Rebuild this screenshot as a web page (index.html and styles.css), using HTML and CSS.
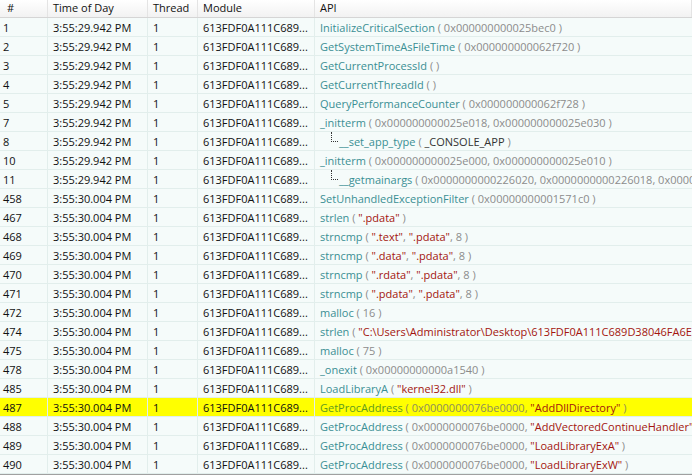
FILE: index.html
```html
<!DOCTYPE html>
<html>
<head>
<meta charset="utf-8">
<link rel="stylesheet" href="styles.css">
</head>
<body>
<div class="grid">
  <div class="hrow">
    <div class="hc c1">#</div><div class="hc">Time of Day</div><div class="hc">Thread</div><div class="hc">Module</div><div class="hc">API</div>
  </div>
  <div class="row"><div>1</div><div>3:55:29.942 PM</div><div>1</div><div>613FDF0A111C689...</div><div class="api"><span class="fn">InitializeCriticalSection</span> <span class="p">( 0x000000000025bec0 )</span></div></div>
  <div class="row"><div>2</div><div>3:55:29.942 PM</div><div>1</div><div>613FDF0A111C689...</div><div class="api"><span class="fn">GetSystemTimeAsFileTime</span> <span class="p">( 0x000000000062f720 )</span></div></div>
  <div class="row"><div>3</div><div>3:55:29.942 PM</div><div>1</div><div>613FDF0A111C689...</div><div class="api"><span class="fn">GetCurrentProcessId</span> <span class="p">( )</span></div></div>
  <div class="row"><div>4</div><div>3:55:29.942 PM</div><div>1</div><div>613FDF0A111C689...</div><div class="api"><span class="fn">GetCurrentThreadId</span> <span class="p">( )</span></div></div>
  <div class="row"><div>5</div><div>3:55:29.942 PM</div><div>1</div><div>613FDF0A111C689...</div><div class="api"><span class="fn">QueryPerformanceCounter</span> <span class="p">( 0x000000000062f728 )</span></div></div>
  <div class="row"><div>7</div><div>3:55:29.942 PM</div><div>1</div><div>613FDF0A111C689...</div><div class="api"><span class="fn">_initterm</span> <span class="p">( 0x000000000025e018, 0x000000000025e030 )</span></div></div>
  <div class="row"><div>8</div><div>3:55:29.942 PM</div><div>1</div><div>613FDF0A111C689...</div><div class="api child"><span class="tree"></span><span class="fn">__set_app_type</span> <span class="p">( <span class="k">_CONSOLE_APP</span> )</span></div></div>
  <div class="row"><div>10</div><div>3:55:29.942 PM</div><div>1</div><div>613FDF0A111C689...</div><div class="api"><span class="fn">_initterm</span> <span class="p">( 0x000000000025e000, 0x000000000025e010 )</span></div></div>
  <div class="row"><div>11</div><div>3:55:29.942 PM</div><div>1</div><div>613FDF0A111C689...</div><div class="api child"><span class="tree"></span><span class="fn">__getmainargs</span> <span class="p">( 0x0000000000226020, 0x0000000000226018, 0x0000000000226010 )</span></div></div>
  <div class="row"><div>458</div><div>3:55:30.004 PM</div><div>1</div><div>613FDF0A111C689...</div><div class="api"><span class="fn">SetUnhandledExceptionFilter</span> <span class="p">( 0x00000000001571c0 )</span></div></div>
  <div class="row"><div>467</div><div>3:55:30.004 PM</div><div>1</div><div>613FDF0A111C689...</div><div class="api"><span class="fn">strlen</span> <span class="p">( <span class="s">".pdata"</span> )</span></div></div>
  <div class="row"><div>468</div><div>3:55:30.004 PM</div><div>1</div><div>613FDF0A111C689...</div><div class="api"><span class="fn">strncmp</span> <span class="p">( <span class="s">".text"</span>, <span class="s">".pdata"</span>, 8 )</span></div></div>
  <div class="row"><div>469</div><div>3:55:30.004 PM</div><div>1</div><div>613FDF0A111C689...</div><div class="api"><span class="fn">strncmp</span> <span class="p">( <span class="s">".data"</span>, <span class="s">".pdata"</span>, 8 )</span></div></div>
  <div class="row"><div>470</div><div>3:55:30.004 PM</div><div>1</div><div>613FDF0A111C689...</div><div class="api"><span class="fn">strncmp</span> <span class="p">( <span class="s">".rdata"</span>, <span class="s">".pdata"</span>, 8 )</span></div></div>
  <div class="row"><div>471</div><div>3:55:30.004 PM</div><div>1</div><div>613FDF0A111C689...</div><div class="api"><span class="fn">strncmp</span> <span class="p">( <span class="s">".pdata"</span>, <span class="s">".pdata"</span>, 8 )</span></div></div>
  <div class="row"><div>472</div><div>3:55:30.004 PM</div><div>1</div><div>613FDF0A111C689...</div><div class="api"><span class="fn">malloc</span> <span class="p">( 16 )</span></div></div>
  <div class="row"><div>474</div><div>3:55:30.004 PM</div><div>1</div><div>613FDF0A111C689...</div><div class="api"><span class="fn">strlen</span> <span class="p">( <span class="s">"C:\Users\Administrator\Desktop\613FDF0A111C689D38046FA6EE6F2C0A.exe"</span> )</span></div></div>
  <div class="row"><div>475</div><div>3:55:30.004 PM</div><div>1</div><div>613FDF0A111C689...</div><div class="api"><span class="fn">malloc</span> <span class="p">( 75 )</span></div></div>
  <div class="row"><div>478</div><div>3:55:30.004 PM</div><div>1</div><div>613FDF0A111C689...</div><div class="api"><span class="fn">_onexit</span> <span class="p">( 0x00000000000a1540 )</span></div></div>
  <div class="row"><div>485</div><div>3:55:30.004 PM</div><div>1</div><div>613FDF0A111C689...</div><div class="api"><span class="fn">LoadLibraryA</span> <span class="p">( <span class="s">"kernel32.dll"</span> )</span></div></div>
  <div class="row sel"><div>487</div><div>3:55:30.004 PM</div><div>1</div><div>613FDF0A111C689...</div><div class="api"><span class="fn">GetProcAddress</span> <span class="p">( 0x0000000076be0000, <span class="s">"AddDllDirectory"</span> )</span></div></div>
  <div class="row"><div>488</div><div>3:55:30.004 PM</div><div>1</div><div>613FDF0A111C689...</div><div class="api"><span class="fn">GetProcAddress</span> <span class="p">( 0x0000000076be0000, <span class="s">"AddVectoredContinueHandler"</span> )</span></div></div>
  <div class="row"><div>489</div><div>3:55:30.004 PM</div><div>1</div><div>613FDF0A111C689...</div><div class="api"><span class="fn">GetProcAddress</span> <span class="p">( 0x0000000076be0000, <span class="s">"LoadLibraryExA"</span> )</span></div></div>
  <div class="row"><div>490</div><div>3:55:30.004 PM</div><div>1</div><div>613FDF0A111C689...</div><div class="api"><span class="fn">GetProcAddress</span> <span class="p">( 0x0000000076be0000, <span class="s">"LoadLibraryExW"</span> )</span></div></div>
</div>
</body>
</html>
```
FILE: styles.css
```css
html, body {
  margin: 0;
  padding: 0;
  background: #f0f0f0;
  overflow: hidden;
}
body {
  width: 692px;
  height: 475px;
  font-family: "Open Sans", "DejaVu Sans", sans-serif;
  font-size: 11px;
  color: #111;
}
.grid {
  display: flex;
  flex-direction: column;
  width: 692px;
  height: 474px;
  background: #f5fbfa;
  border-bottom: 1px solid #a0a0a0;
  overflow: hidden;
}
.hrow, .row {
  display: grid;
  grid-template-columns: 48px 100px 50px 117px 1fr;
  white-space: nowrap;
  flex: none;
}
.hrow {
  height: 18px;
  background: linear-gradient(#ffffff, #f2f2f2);
  border-bottom: 1px solid #d5d5d5;
  box-sizing: border-box;
}
.hc {
  padding-left: 5px;
  line-height: 16px;
  border-right: 1px solid #e4e4e4;
  overflow: hidden;
}
.hc.c1 { padding-left: 7px; }
.row {
  height: 19px;
  box-sizing: border-box;
  border-bottom: 1px solid #e2eeec;
}
.row > div {
  padding-left: 5px;
  line-height: 19px;
  border-right: 1px solid #e2eeec;
  overflow: hidden;
}
.row > div:first-child { padding-left: 3px; }
.row.sel { background: #ffff00; }
.api { border-right: none !important; }
.fn { color: #3a8f94; }
.p { color: #8c8c8c; }
.k { color: #333; }
.s { color: #a3150e; }
.sel .fn { color: #5f9a1f; }
.sel .p { color: #8e8e5a; }
.child { position: relative; padding-left: 24px !important; }
.tree {
  position: absolute;
  left: 16px;
  top: 0;
  width: 6px;
  height: 9px;
  border-left: 1px dotted #333;
  border-bottom: 1px dotted #333;
}
```
